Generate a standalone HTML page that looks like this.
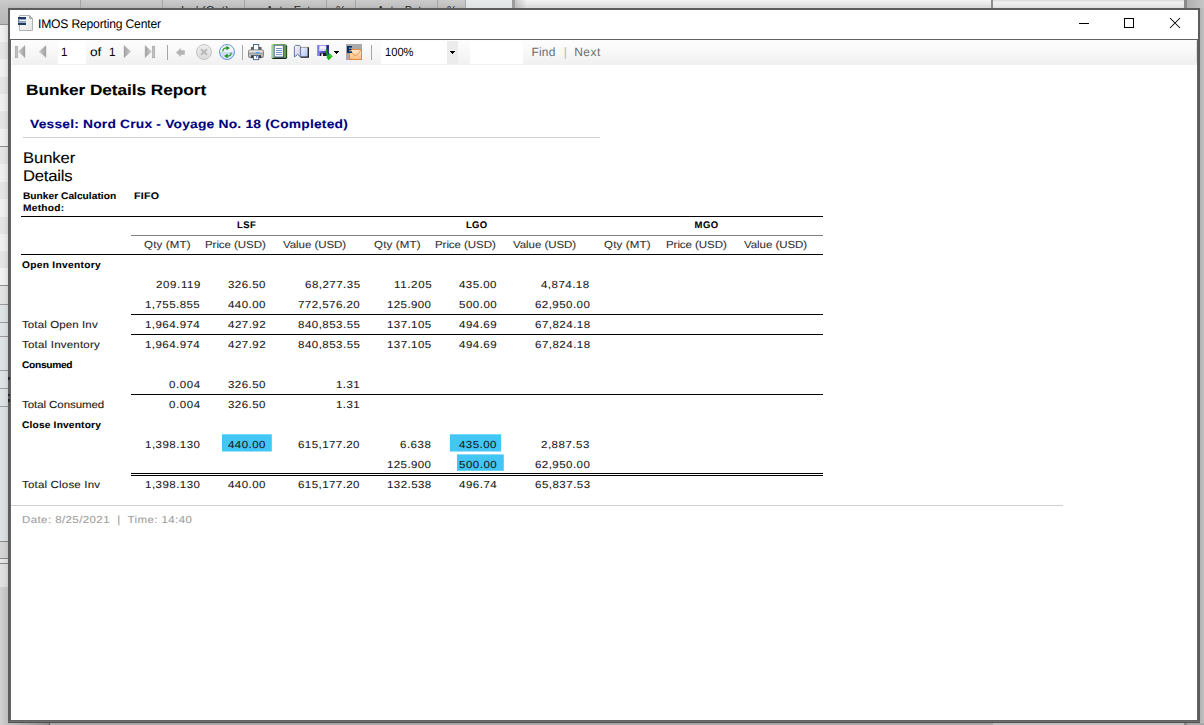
<!DOCTYPE html>
<html><head><meta charset="utf-8"><title>IMOS Reporting Center</title>
<style>
html,body{margin:0;padding:0}
body{width:1204px;height:725px;overflow:hidden;position:relative;background:#c6c6c6;font-family:"Liberation Sans",sans-serif}
.a{position:absolute}
.t{position:absolute;white-space:nowrap;line-height:20px;height:20px;transform-origin:0 0;text-rendering:geometricPrecision;-webkit-text-stroke:.09px}
.p{white-space:pre}
.u{-webkit-text-stroke:0}
.ln{position:absolute;height:1px;background:#000}
.hl{position:absolute;background:#3dc1f0}
</style></head>
<body>
<div class="a" style="left:0px;top:0px;width:466px;height:8px;background:linear-gradient(#cbcbcb,#c4c4c4 50%,#bababa)"></div>
<div class="a" style="left:80px;top:0px;width:1px;height:8px;background:#a4a4a4"></div>
<div class="a" style="left:162px;top:0px;width:1px;height:8px;background:#a4a4a4"></div>
<div class="a" style="left:244px;top:0px;width:1px;height:8px;background:#a4a4a4"></div>
<div class="a" style="left:326px;top:0px;width:1px;height:8px;background:#a4a4a4"></div>
<div class="a" style="left:355px;top:0px;width:1px;height:8px;background:#a4a4a4"></div>
<div class="a" style="left:437px;top:0px;width:1px;height:8px;background:#a4a4a4"></div>
<div class="a" style="left:466px;top:0px;width:46px;height:8px;background:linear-gradient(#e8ebeb,#dfe3e3)"></div>
<div class="a" style="left:465px;top:0px;width:1px;height:8px;background:#a8a8a8"></div>
<div class="a" style="left:512px;top:0px;width:3px;height:8px;background:#9c9c9c"></div>
<div class="a" style="left:515px;top:0px;width:476px;height:8px;background:linear-gradient(#f4f4f4,#e6e6e6 60%,#dcdcdc 85%,#e0e0e0)"></div>
<div class="a" style="left:515px;top:0px;width:12px;height:8px;background:linear-gradient(90deg,rgba(160,160,160,.55),rgba(160,160,160,0))"></div>
<div class="a" style="left:991px;top:0px;width:2px;height:8px;background:#8c8c8c"></div>
<div class="a" style="left:993px;top:0px;width:191px;height:8px;background:linear-gradient(#d6d6d6,#f0f0f0 25%,#e8e8e8 70%,#dedede)"></div>
<div class="a" style="left:1184px;top:0px;width:3px;height:8px;background:#8a8a8a"></div>
<div class="a" style="left:1187px;top:0px;width:17px;height:8px;background:linear-gradient(90deg,#b0b0b0,#c6c6c6)"></div>
<div class="a" style="left:0;top:0;width:466px;height:8px;overflow:hidden;font-size:11px;line-height:12px;color:#222;white-space:nowrap"><span class="a" style="left:181px;top:4px;letter-spacing:.5px">In / (Out)</span><span class="a" style="left:266px;top:4px;letter-spacing:.35px">Act - Est</span><span class="a" style="left:336px;top:4px">%</span><span class="a" style="left:377px;top:4px;letter-spacing:.35px">Act - Pst</span><span class="a" style="left:447px;top:4px">%</span></div>
<div class="a" style="left:0px;top:8px;width:8px;height:16px;background:linear-gradient(#b8b8b8,#b4b4b4)"></div>
<div class="a" style="left:0px;top:0px;width:8px;height:24px;background:linear-gradient(#cccccc,#c2c2c2 35%,#b7b7b7)"></div>
<div class="a" style="left:0px;top:24px;width:8px;height:1px;background:#8e8e8e"></div>
<div class="a" style="left:0px;top:25px;width:8px;height:17px;background:#f1f1f1"></div>
<div class="a" style="left:0px;top:42px;width:8px;height:17px;background:#e6e6e6"></div>
<div class="a" style="left:0px;top:59px;width:8px;height:18px;background:#f1f1f1"></div>
<div class="a" style="left:0px;top:77px;width:8px;height:17px;background:#e6e6e6"></div>
<div class="a" style="left:0px;top:94px;width:8px;height:17px;background:#f1f1f1"></div>
<div class="a" style="left:0px;top:111px;width:8px;height:18px;background:#e6e6e6"></div>
<div class="a" style="left:0px;top:129px;width:8px;height:17px;background:#f1f1f1"></div>
<div class="a" style="left:0px;top:146px;width:8px;height:1px;background:#8e8e8e"></div>
<div class="a" style="left:0px;top:147px;width:8px;height:17px;background:#e6e6e6"></div>
<div class="a" style="left:0px;top:164px;width:8px;height:18px;background:#f1f1f1"></div>
<div class="a" style="left:0px;top:182px;width:8px;height:17px;background:#e6e6e6"></div>
<div class="a" style="left:0px;top:199px;width:8px;height:18px;background:#f1f1f1"></div>
<div class="a" style="left:0px;top:217px;width:8px;height:17px;background:#e6e6e6"></div>
<div class="a" style="left:0px;top:234px;width:8px;height:17px;background:#f1f1f1"></div>
<div class="a" style="left:0px;top:251px;width:8px;height:17px;background:#e6e6e6"></div>
<div class="a" style="left:0px;top:268px;width:8px;height:17px;background:#f3f3f3"></div>
<div class="a" style="left:0px;top:285px;width:8px;height:1px;background:#8e8e8e"></div>
<div class="a" style="left:0px;top:286px;width:8px;height:18px;background:#e4e4e4"></div>
<div class="a" style="left:0px;top:304px;width:8px;height:1px;background:#9a9a9a"></div>
<div class="a" style="left:0px;top:305px;width:8px;height:17px;background:#dfe5e7"></div>
<div class="a" style="left:0px;top:322px;width:8px;height:1px;background:#9a9a9a"></div>
<div class="a" style="left:0px;top:323px;width:8px;height:13px;background:#dfe5e7"></div>
<div class="a" style="left:0px;top:336px;width:8px;height:1px;background:#9a9a9a"></div>
<div class="a" style="left:0px;top:337px;width:8px;height:33px;background:#dfe5e7"></div>
<div class="a" style="left:0px;top:370px;width:8px;height:1px;background:#a0a0a0"></div>
<div class="a" style="left:0px;top:371px;width:8px;height:17px;background:#dfe5e7"></div>
<div class="a" style="left:0px;top:388px;width:8px;height:1px;background:#a0a0a0"></div>
<div class="a" style="left:0px;top:389px;width:8px;height:17px;background:#dfe5e7"></div>
<div class="a" style="left:0px;top:406px;width:8px;height:1px;background:#a0a0a0"></div>
<div class="a" style="left:0px;top:407px;width:8px;height:134px;background:#dde2e4"></div>
<div class="a" style="left:0px;top:541px;width:8px;height:1px;background:#8a8a8a"></div>
<div class="a" style="left:0px;top:542px;width:8px;height:16px;background:#d6d6d6"></div>
<div class="a" style="left:0px;top:558px;width:8px;height:1px;background:#8a8a8a"></div>
<div class="a" style="left:0px;top:559px;width:8px;height:4px;background:#e8e8e8"></div>
<div class="a" style="left:0px;top:563px;width:8px;height:1px;background:#8a8a8a"></div>
<div class="a" style="left:0px;top:564px;width:8px;height:23px;background:#e2e2e2"></div>
<div class="a" style="left:0px;top:587px;width:8px;height:136px;background:linear-gradient(90deg,#d2d2d2,#bcbcbc)"></div>
<div class="a" style="left:0px;top:25px;width:8px;height:562px;background:linear-gradient(90deg,rgba(0,0,0,0),rgba(0,0,0,.02) 50%,rgba(0,0,0,.09))"></div>
<div class="a" style="left:1200px;top:8px;width:4px;height:717px;background:linear-gradient(90deg,#b4b4b4,#c0c0c0)"></div>
<div class="a" style="left:0px;top:723px;width:1204px;height:2px;background:#a8a8a8"></div>
<div class="a" style="left:0px;top:723px;width:49px;height:2px;background:linear-gradient(90deg,#cfcfcf,#bdbdbd 20%,#8e8e8e)"></div>
<div class="a" style="left:49px;top:723px;width:1px;height:2px;background:#5a5a5a"></div>
<div class="a" style="left:993px;top:723px;width:191px;height:2px;background:#c0c0c0"></div>
<div class="a" style="left:1184px;top:723px;width:3px;height:2px;background:#8a8a8a"></div>
<div class="a" style="left:8px;top:8px;width:1192px;height:715px;background:#5c5c5c"></div>
<div class="a" style="left:8px;top:721px;width:1192px;height:1px;background:#707070"></div>
<div class="a" style="left:8px;top:722px;width:1192px;height:1px;background:#505050"></div>
<div class="a" style="left:10px;top:10px;width:1188px;height:29px;background:#fff"></div>
<div class="a" style="left:10px;top:39px;width:1188px;height:682px;background:#626262"></div>
<div class="a" style="left:11px;top:40px;width:1186px;height:680px;background:#fff"></div>
<div class="a" style="left:12px;top:40px;width:1185px;height:25px;background:linear-gradient(#fdfdfd,#f9f9f9 40%,#f0f0f0)"></div>
<div class="a" style="left:1196px;top:41px;width:1px;height:22px;background:#dedede"></div>
<div class="a" style="left:8px;top:377px;width:2px;height:3px;background:#2a2030"></div>
<div class="a" style="left:8px;top:394px;width:2px;height:2px;background:#2a2030"></div>
<div class="a" style="left:8px;top:399px;width:2px;height:3px;background:#2a2030"></div>
<div class="a" style="left:58px;top:41px;width:28px;height:23px;background:#fff"></div>
<div class="a" style="left:381px;top:41px;width:66px;height:23px;background:#fff"></div>
<div class="a" style="left:447px;top:41px;width:11px;height:23px;background:#ececec"></div>
<div class="a" style="left:470px;top:41px;width:53px;height:23px;background:#fff"></div>
<div class="a" style="left:167px;top:45px;width:1px;height:15px;background:#a6a6a6"></div>
<div class="a" style="left:242px;top:45px;width:1px;height:15px;background:#a6a6a6"></div>
<div class="a" style="left:371px;top:45px;width:1px;height:15px;background:#a6a6a6"></div>
<div class="ln" style="left:23px;top:137px;width:577px;background:#d0d0d0"></div>
<div class="ln" style="left:21px;top:216px;width:802px"></div>
<div class="ln" style="left:131px;top:235px;width:692px;background:#808080"></div>
<div class="ln" style="left:21px;top:254px;width:802px"></div>
<div class="ln" style="left:131px;top:314px;width:692px"></div>
<div class="ln" style="left:131px;top:334px;width:692px"></div>
<div class="ln" style="left:131px;top:394px;width:692px"></div>
<div class="ln" style="left:131px;top:473px;width:692px"></div>
<div class="ln" style="left:131px;top:475px;width:692px"></div>
<div class="ln" style="left:11px;top:505px;width:1052px;background:#d0d0d0"></div>
<svg class="a" style="left:0;top:0" width="1204" height="725" viewBox="0 0 1204 725"><g fill="#42c6f5"><rect x="222" y="434.3" width="49.8" height="17.2"/><rect x="449.9" y="434.3" width="51.2" height="17.2"/><rect x="457" y="454.4" width="46.8" height="16.4"/></g></svg>
<span class="t u" style="left:37.94px;top:14px;font-size:12.5px;color:#000;letter-spacing:-0.191px;transform:scaleX(0.97)">IMOS Reporting Center</span>
<span class="t u" style="left:60.72px;top:42px;font-size:12px;color:#000;letter-spacing:0px;transform:scaleX(0.97)">1</span>
<span class="t u" style="left:89.77px;top:42px;font-size:12px;color:#000;letter-spacing:-0.182px;transform:scaleX(1.14)">of</span>
<span class="t u" style="left:108.82px;top:42px;font-size:12px;color:#000;letter-spacing:0px;transform:scaleX(0.97)">1</span>
<span class="t u" style="left:384.55px;top:42px;font-size:12px;color:#000;letter-spacing:-0.017px;transform:scaleX(0.93)">100%</span>
<span class="t u" style="left:531.45px;top:42px;font-size:12px;color:#6d6d6d;letter-spacing:0.209px">Find</span>
<span class="t u" style="left:563.7px;top:42px;font-size:12px;color:#b4b4b4;letter-spacing:0px">|</span>
<span class="t u" style="left:574.18px;top:42px;font-size:12px;color:#6d6d6d;letter-spacing:0.458px">Next</span>
<span class="t" style="left:26.06px;top:81px;font-size:15px;color:#000;letter-spacing:-0.042px;font-weight:700;transform:scaleX(1.15)">Bunker Details Report</span>
<span class="t" style="left:30.35px;top:114px;font-size:12px;color:#000080;letter-spacing:0.177px;font-weight:700;transform:scaleX(1.15)">Vessel: Nord Crux - Voyage No. 18 (Completed)</span>
<span class="t" style="left:23.08px;top:149px;font-size:15.4px;color:#000;letter-spacing:-0.071px;transform:scaleX(1.08)">Bunker</span>
<span class="t" style="left:23.08px;top:167px;font-size:15.4px;color:#000;letter-spacing:-0.182px;transform:scaleX(1.08)">Details</span>
<span class="t" style="left:22.91px;top:187px;font-size:9.5px;color:#000;letter-spacing:0.026px;font-weight:700;transform:scaleX(1.07)">Bunker Calculation</span>
<span class="t" style="left:22.91px;top:199px;font-size:9.5px;color:#000;letter-spacing:0.246px;font-weight:700;transform:scaleX(1.07)">Method:</span>
<span class="t" style="left:133.88px;top:187px;font-size:9.5px;color:#000;letter-spacing:0.223px;font-weight:700;transform:scaleX(1.12)">FIFO</span>
<span class="t" style="left:236.94px;top:216px;font-size:9.5px;color:#000;letter-spacing:0.463px;font-weight:700">LSF</span>
<span class="t" style="left:465.94px;top:216px;font-size:9.5px;color:#000;letter-spacing:0.249px;font-weight:700">LGO</span>
<span class="t" style="left:694.54px;top:216px;font-size:9.5px;color:#000;letter-spacing:0.433px;font-weight:700">MGO</span>
<span class="t" style="left:144.1px;top:236px;font-size:10.2px;color:#333;letter-spacing:0.161px;transform:scaleX(1.13)">Qty (MT)</span>
<span class="t" style="left:204.67px;top:236px;font-size:10.2px;color:#333;letter-spacing:-0.058px;transform:scaleX(1.13)">Price (USD)</span>
<span class="t" style="left:283.02px;top:236px;font-size:10.2px;color:#333;letter-spacing:-0.059px;transform:scaleX(1.13)">Value (USD)</span>
<span class="t" style="left:374.1px;top:236px;font-size:10.2px;color:#333;letter-spacing:0.161px;transform:scaleX(1.13)">Qty (MT)</span>
<span class="t" style="left:434.67px;top:236px;font-size:10.2px;color:#333;letter-spacing:-0.058px;transform:scaleX(1.13)">Price (USD)</span>
<span class="t" style="left:513.02px;top:236px;font-size:10.2px;color:#333;letter-spacing:-0.059px;transform:scaleX(1.13)">Value (USD)</span>
<span class="t" style="left:604.2px;top:236px;font-size:10.2px;color:#333;letter-spacing:0.161px;transform:scaleX(1.13)">Qty (MT)</span>
<span class="t" style="left:665.67px;top:236px;font-size:10.2px;color:#333;letter-spacing:-0.058px;transform:scaleX(1.13)">Price (USD)</span>
<span class="t" style="left:744.02px;top:236px;font-size:10.2px;color:#333;letter-spacing:-0.059px;transform:scaleX(1.13)">Value (USD)</span>
<span class="t" style="left:22.02px;top:256px;font-size:9.5px;color:#000;letter-spacing:0.289px;font-weight:700;transform:scaleX(1.07)">Open Inventory</span>
<span class="t" style="left:155.57px;top:276px;font-size:10.2px;color:#1a1a1a;letter-spacing:0.554px;transform:scaleX(1.13)">209.119</span>
<span class="t" style="left:228.34px;top:276px;font-size:10.2px;color:#1a1a1a;letter-spacing:0.393px;transform:scaleX(1.13)">326.50</span>
<span class="t" style="left:304.71px;top:276px;font-size:10.2px;color:#1a1a1a;letter-spacing:0.429px;transform:scaleX(1.13)">68,277.35</span>
<span class="t" style="left:393.5px;top:276px;font-size:10.2px;color:#1a1a1a;letter-spacing:0.57px;transform:scaleX(1.13)">11.205</span>
<span class="t" style="left:459.38px;top:276px;font-size:10.2px;color:#1a1a1a;letter-spacing:0.404px;transform:scaleX(1.13)">435.00</span>
<span class="t" style="left:541.41px;top:276px;font-size:10.2px;color:#1a1a1a;letter-spacing:0.417px;transform:scaleX(1.13)">4,874.18</span>
<span class="t" style="left:145.15px;top:296px;font-size:10.2px;color:#1a1a1a;letter-spacing:0.394px;transform:scaleX(1.13)">1,755.855</span>
<span class="t" style="left:228.48px;top:296px;font-size:10.2px;color:#1a1a1a;letter-spacing:0.404px;transform:scaleX(1.13)">440.00</span>
<span class="t" style="left:297.87px;top:296px;font-size:10.2px;color:#1a1a1a;letter-spacing:0.409px;transform:scaleX(1.13)">772,576.20</span>
<span class="t" style="left:386.72px;top:296px;font-size:10.2px;color:#1a1a1a;letter-spacing:0.35px;transform:scaleX(1.13)">125.900</span>
<span class="t" style="left:459.16px;top:296px;font-size:10.2px;color:#1a1a1a;letter-spacing:0.454px;transform:scaleX(1.13)">500.00</span>
<span class="t" style="left:534.51px;top:296px;font-size:10.2px;color:#1a1a1a;letter-spacing:0.403px;transform:scaleX(1.13)">62,950.00</span>
<span class="t" style="left:22.01px;top:316px;font-size:10.2px;color:#1a1a1a;letter-spacing:0.096px;transform:scaleX(1.13)">Total Open Inv</span>
<span class="t" style="left:145.15px;top:316px;font-size:10.2px;color:#1a1a1a;letter-spacing:0.388px;transform:scaleX(1.13)">1,964.974</span>
<span class="t" style="left:228.48px;top:316px;font-size:10.2px;color:#1a1a1a;letter-spacing:0.434px;transform:scaleX(1.13)">427.92</span>
<span class="t" style="left:297.93px;top:316px;font-size:10.2px;color:#1a1a1a;letter-spacing:0.424px;transform:scaleX(1.13)">840,853.55</span>
<span class="t" style="left:386.72px;top:316px;font-size:10.2px;color:#1a1a1a;letter-spacing:0.377px;transform:scaleX(1.13)">137.105</span>
<span class="t" style="left:459.38px;top:316px;font-size:10.2px;color:#1a1a1a;letter-spacing:0.432px;transform:scaleX(1.13)">494.69</span>
<span class="t" style="left:534.51px;top:316px;font-size:10.2px;color:#1a1a1a;letter-spacing:0.433px;transform:scaleX(1.13)">67,824.18</span>
<span class="t" style="left:22.01px;top:336px;font-size:10.2px;color:#1a1a1a;letter-spacing:0.182px;transform:scaleX(1.13)">Total Inventory</span>
<span class="t" style="left:145.15px;top:336px;font-size:10.2px;color:#1a1a1a;letter-spacing:0.388px;transform:scaleX(1.13)">1,964.974</span>
<span class="t" style="left:228.48px;top:336px;font-size:10.2px;color:#1a1a1a;letter-spacing:0.434px;transform:scaleX(1.13)">427.92</span>
<span class="t" style="left:297.93px;top:336px;font-size:10.2px;color:#1a1a1a;letter-spacing:0.424px;transform:scaleX(1.13)">840,853.55</span>
<span class="t" style="left:386.72px;top:336px;font-size:10.2px;color:#1a1a1a;letter-spacing:0.377px;transform:scaleX(1.13)">137.105</span>
<span class="t" style="left:459.38px;top:336px;font-size:10.2px;color:#1a1a1a;letter-spacing:0.432px;transform:scaleX(1.13)">494.69</span>
<span class="t" style="left:534.51px;top:336px;font-size:10.2px;color:#1a1a1a;letter-spacing:0.433px;transform:scaleX(1.13)">67,824.18</span>
<span class="t" style="left:22.02px;top:356px;font-size:9.5px;color:#000;letter-spacing:-0.27px;font-weight:700;transform:scaleX(1.07)">Consumed</span>
<span class="t" style="left:169.28px;top:376px;font-size:10.2px;color:#1a1a1a;letter-spacing:0.524px;transform:scaleX(1.13)">0.004</span>
<span class="t" style="left:228.34px;top:376px;font-size:10.2px;color:#1a1a1a;letter-spacing:0.393px;transform:scaleX(1.13)">326.50</span>
<span class="t" style="left:335.96px;top:376px;font-size:10.2px;color:#1a1a1a;letter-spacing:0.404px;transform:scaleX(1.13)">1.31</span>
<span class="t" style="left:22.01px;top:396px;font-size:10.2px;color:#1a1a1a;letter-spacing:-0.064px;transform:scaleX(1.13)">Total Consumed</span>
<span class="t" style="left:169.28px;top:396px;font-size:10.2px;color:#1a1a1a;letter-spacing:0.524px;transform:scaleX(1.13)">0.004</span>
<span class="t" style="left:228.34px;top:396px;font-size:10.2px;color:#1a1a1a;letter-spacing:0.393px;transform:scaleX(1.13)">326.50</span>
<span class="t" style="left:335.96px;top:396px;font-size:10.2px;color:#1a1a1a;letter-spacing:0.404px;transform:scaleX(1.13)">1.31</span>
<span class="t" style="left:22.02px;top:416px;font-size:9.5px;color:#000;letter-spacing:0.174px;font-weight:700;transform:scaleX(1.07)">Close Inventory</span>
<span class="t" style="left:145.15px;top:436px;font-size:10.2px;color:#1a1a1a;letter-spacing:0.42px;transform:scaleX(1.13)">1,398.130</span>
<span class="t" style="left:228.48px;top:436px;font-size:10.2px;color:#1a1a1a;letter-spacing:0.404px;transform:scaleX(1.13)">440.00</span>
<span class="t" style="left:297.93px;top:436px;font-size:10.2px;color:#1a1a1a;letter-spacing:0.384px;transform:scaleX(1.13)">615,177.20</span>
<span class="t" style="left:400.04px;top:436px;font-size:10.2px;color:#1a1a1a;letter-spacing:0.447px;transform:scaleX(1.13)">6.638</span>
<span class="t" style="left:459.38px;top:436px;font-size:10.2px;color:#1a1a1a;letter-spacing:0.404px;transform:scaleX(1.13)">435.00</span>
<span class="t" style="left:541.28px;top:436px;font-size:10.2px;color:#1a1a1a;letter-spacing:0.444px;transform:scaleX(1.13)">2,887.53</span>
<span class="t" style="left:386.72px;top:456px;font-size:10.2px;color:#1a1a1a;letter-spacing:0.35px;transform:scaleX(1.13)">125.900</span>
<span class="t" style="left:459.16px;top:456px;font-size:10.2px;color:#1a1a1a;letter-spacing:0.454px;transform:scaleX(1.13)">500.00</span>
<span class="t" style="left:534.51px;top:456px;font-size:10.2px;color:#1a1a1a;letter-spacing:0.403px;transform:scaleX(1.13)">62,950.00</span>
<span class="t" style="left:22.01px;top:476px;font-size:10.2px;color:#1a1a1a;letter-spacing:0.161px;transform:scaleX(1.13)">Total Close Inv</span>
<span class="t" style="left:145.15px;top:476px;font-size:10.2px;color:#1a1a1a;letter-spacing:0.42px;transform:scaleX(1.13)">1,398.130</span>
<span class="t" style="left:228.48px;top:476px;font-size:10.2px;color:#1a1a1a;letter-spacing:0.404px;transform:scaleX(1.13)">440.00</span>
<span class="t" style="left:297.93px;top:476px;font-size:10.2px;color:#1a1a1a;letter-spacing:0.384px;transform:scaleX(1.13)">615,177.20</span>
<span class="t" style="left:386.72px;top:476px;font-size:10.2px;color:#1a1a1a;letter-spacing:0.381px;transform:scaleX(1.13)">132.538</span>
<span class="t" style="left:459.38px;top:476px;font-size:10.2px;color:#1a1a1a;letter-spacing:0.454px;transform:scaleX(1.13)">496.74</span>
<span class="t" style="left:534.51px;top:476px;font-size:10.2px;color:#1a1a1a;letter-spacing:0.431px;transform:scaleX(1.13)">65,837.53</span>
<span class="t p" style="left:22.27px;top:511px;font-size:10.2px;color:#a0a0a0;letter-spacing:0.356px;transform:scaleX(1.13)">Date: 8/25/2021  |  Time: 14:40</span>
<svg class="a" style="left:0;top:0" width="1204" height="725" viewBox="0 0 1204 725">
<defs>
<linearGradient id="gPage" x1="0" y1="0" x2="1" y2="1"><stop offset="0" stop-color="#fff"/><stop offset="1" stop-color="#e4e4e4"/></linearGradient>
<linearGradient id="gTriL" x1="0" y1="0" x2="1" y2="0"><stop offset="0" stop-color="#d0d0d0"/><stop offset="1" stop-color="#9e9e9e"/></linearGradient>
<linearGradient id="gTriR" x1="0" y1="0" x2="1" y2="0"><stop offset="0" stop-color="#9e9e9e"/><stop offset="1" stop-color="#d0d0d0"/></linearGradient>
<linearGradient id="gStop" x1="0" y1="0" x2="0" y2="1"><stop offset="0" stop-color="#efefef"/><stop offset="1" stop-color="#d9d9d9"/></linearGradient>
<linearGradient id="gRef" x1="0" y1="0" x2="0" y2="1"><stop offset="0" stop-color="#f6f9fd"/><stop offset=".5" stop-color="#eaf1fb"/><stop offset=".5" stop-color="#c6dbf6"/><stop offset="1" stop-color="#d4e4f8"/></linearGradient>
<linearGradient id="gPrn" x1="0" y1="0" x2="0" y2="1"><stop offset="0" stop-color="#f6f6f6"/><stop offset=".28" stop-color="#dadada"/><stop offset=".42" stop-color="#9c9c9c"/><stop offset=".58" stop-color="#b4b4b4"/><stop offset=".75" stop-color="#d2d2d2"/><stop offset="1" stop-color="#8e8e8e"/></linearGradient>
<linearGradient id="gGrn" x1="0" y1="0" x2="1" y2="0"><stop offset="0" stop-color="#cde8c6"/><stop offset=".22" stop-color="#74b06a"/><stop offset="1" stop-color="#5a9a52"/></linearGradient>
<linearGradient id="gBookL" x1="0" y1="0" x2="1" y2="1"><stop offset="0" stop-color="#fbfbfb"/><stop offset="1" stop-color="#c4c4c4"/></linearGradient>
<linearGradient id="gBookR" x1="0" y1="0" x2="1" y2="1"><stop offset="0" stop-color="#f2f5fe"/><stop offset="1" stop-color="#a9bdee"/></linearGradient>
<linearGradient id="gFlop" x1="0" y1="0" x2="1" y2="0"><stop offset="0" stop-color="#9494f4"/><stop offset=".35" stop-color="#5e5ede"/><stop offset="1" stop-color="#2a2a92"/></linearGradient>
<linearGradient id="gEnv" x1="0" y1="0" x2="0" y2="1"><stop offset="0" stop-color="#fee9d2"/><stop offset="1" stop-color="#f8bf84"/></linearGradient>
</defs>
<!-- title icon -->
<path d="M19.5 15.5H29.5L32.5 18.5V30.5H19.5Z" fill="url(#gPage)" stroke="#b2b2b2"/>
<path d="M29.5 15.5V18.5H32.5Z" fill="#c8c8c8" stroke="#9a9a9a" stroke-width=".8"/>
<rect x="18" y="17" width="8" height="8" fill="#fff"/>
<rect x="18" y="17" width="8" height="2.4" fill="#1f3a68"/>
<rect x="18" y="19.4" width="8" height=".7" fill="#8a9ab8"/>
<rect x="18.3" y="21.1" width="7.7" height=".9" fill="#8496b6"/>
<rect x="18" y="22.7" width="8" height="2.3" fill="#1f3a68"/>
<rect x="18" y="22.1" width="8" height=".6" fill="#93a2bd"/>
<rect x="18" y="19.4" width="1.3" height="3.3" fill="#6c80a6"/>
<!-- window controls -->
<g shape-rendering="crispEdges">
<rect x="1079" y="23" width="10" height="1" fill="#000"/>
<rect x="1124.5" y="18.5" width="9" height="9" fill="none" stroke="#000"/>
</g>
<path d="M1170 18L1180 28M1180 18L1170 28" stroke="#000" stroke-width="1.02"/>
<!-- nav: first, prev, next, last -->
<rect x="15.3" y="46.3" width="2.4" height="11.4" fill="#c2c2c2" stroke="#a6a6a6" stroke-width=".7"/>
<path d="M25 45.4V57.7L18.6 51.55Z" fill="url(#gTriL)" stroke="#a8a8a8" stroke-width=".4"/>
<path d="M46 45.5V57.6L39.2 51.55Z" fill="url(#gTriL)" stroke="#a8a8a8" stroke-width=".4"/>
<path d="M124 45.4V57.7L130.8 51.55Z" fill="url(#gTriR)" stroke="#a8a8a8" stroke-width=".4"/>
<path d="M145.1 45.4V57.7L151.4 51.55Z" fill="url(#gTriR)" stroke="#a8a8a8" stroke-width=".4"/>
<rect x="152.3" y="46.3" width="2.4" height="11.4" fill="#c2c2c2" stroke="#a6a6a6" stroke-width=".7"/>
<!-- back -->
<path d="M176 52.5L180.8 48.1V50.2H184.8V54.8H180.8V56.9Z" fill="#b4b4b4"/>
<!-- stop -->
<circle cx="204" cy="52" r="7.5" fill="url(#gStop)" stroke="#c4c4c4"/>
<path d="M201 49.2L207 54.8M207 49.2L201 54.8" stroke="#b8b8b8" stroke-width="2"/>
<!-- refresh -->
<circle cx="227" cy="52" r="7.5" fill="url(#gRef)" stroke="#6496dc"/>
<path d="M222.9 51.4C222.8 48.8 224.4 47.9 226.6 47.9" fill="none" stroke="#2aa52a" stroke-width="1.35"/>
<path d="M226.3 45.7L229.9 48L226.3 50.3Z" fill="#1a8f1a"/>
<path d="M231.1 52.6C231.2 55.2 229.6 56.1 227.4 56.1" fill="none" stroke="#2aa52a" stroke-width="1.35"/>
<path d="M227.7 53.7L224.1 56L227.7 58.3Z" fill="#1a8f1a"/>
<!-- printer -->
<rect x="251" y="47" width="10.5" height="3.6" fill="#5c5c5c"/>
<rect x="253.5" y="44.5" width="5.2" height="6" fill="#fff" stroke="#4d6c8c"/>
<rect x="248.5" y="49.9" width="15" height="7.7" rx="1.3" fill="url(#gPrn)" stroke="#7c7c7c" stroke-width=".9"/>
<rect x="256" y="52" width="3.2" height="1.3" fill="#4aa0f0"/>
<rect x="251" y="55.2" width="10.2" height="2.9" fill="#3c3c3c"/>
<rect x="253.5" y="55.5" width="5.2" height="4.1" fill="#fff" stroke="#4d6c8c"/>
<rect x="256" y="56.3" width="1.3" height="1.3" fill="#2a3ad0"/>
<!-- layout (green) -->
<rect x="271.6" y="44.7" width="15.5" height="14.2" rx="1.6" fill="#132613"/>
<rect x="271" y="44" width="15.3" height="14" rx="1.6" fill="url(#gGrn)"/>
<rect x="274.6" y="45.6" width="9.4" height="12" fill="#1d2340"/>
<rect x="274.4" y="45.4" width="8.8" height="11.5" fill="#fff" stroke="#6675a6" stroke-width=".7"/>
<g fill="#6a86c0"><rect x="276" y="48" width="6" height=".9"/><rect x="276" y="50.05" width="6" height=".9"/><rect x="276" y="52.15" width="6" height=".9"/><rect x="276" y="54.2" width="6" height=".9"/></g>
<!-- page setup (book) -->
<rect x="300.7" y="47.3" width="7.9" height="10.2" fill="url(#gBookR)"/>
<path d="M300.7 47.4H308" stroke="#8a8a8a" stroke-width=".8"/>
<path d="M300.5 57.2H308.3V47.2" fill="none" stroke="#1c1c1c" stroke-width="1.3"/>
<path d="M294.4 46.5L295.6 45.4H299.4L300.6 46.5V57L297.5 54.5L294.4 57Z" fill="url(#gBookL)" stroke="#4f6e9c" stroke-width=".9"/>
<!-- export (floppy + arrow) -->
<rect x="317" y="45" width="12" height="11" fill="url(#gFlop)"/>
<rect x="319.4" y="45.5" width="6.8" height="5.3" fill="#f1f1fd"/>
<rect x="319.4" y="49" width="6.8" height="1.8" fill="#dcdcf6"/>
<rect x="327" y="46.2" width="1" height="3.4" fill="#23237c"/>
<rect x="320" y="53" width="6" height="3" fill="#1c1c1c"/>
<rect x="321.3" y="53.6" width="1.7" height="2.4" fill="#e6e6e6"/>
<path d="M326.6 49.2C326 52.6 326.6 54.6 328.4 55.8" fill="none" stroke="#1c9c1c" stroke-width="1.5"/>
<path d="M329.4 53L332.6 56.6L328.6 60.2L326.4 57.2Z" fill="#20b020"/>
<path d="M329.4 53L332.6 56.6L330 57.2Z" fill="#3fcf3f"/>
<g shape-rendering="crispEdges" fill="#000">
<rect x="334" y="51" width="5" height="1"/><rect x="335" y="52" width="3" height="1"/><rect x="336" y="53" width="1" height="1"/>
<rect x="450" y="51" width="5" height="1"/><rect x="451" y="52" width="3" height="1"/><rect x="452" y="53" width="1" height="1"/>
</g>
<!-- email -->
<rect x="346" y="44" width="16" height="16" fill="#a9a9a9"/>
<rect x="349.5" y="49.5" width="12" height="10" fill="url(#gEnv)" stroke="#e6862a" stroke-width=".9"/>
<path d="M350 59L353.6 55.6M361 59L357.4 55.6" stroke="#f4b070" stroke-width=".6" fill="none"/>
<path d="M349.8 50C352 53 354 55.6 355.5 55.6C357 55.6 359 53 361.2 50" stroke="#ec8c34" stroke-width=".9" fill="none"/>
<g fill="#00306e"><rect x="347" y="46" width="2" height="7"/><rect x="347" y="46" width="5" height="1.6"/><rect x="347" y="48.8" width="4.4" height="1.5"/><rect x="347" y="51.4" width="5" height="1.6"/></g>
</svg>

</body></html>
